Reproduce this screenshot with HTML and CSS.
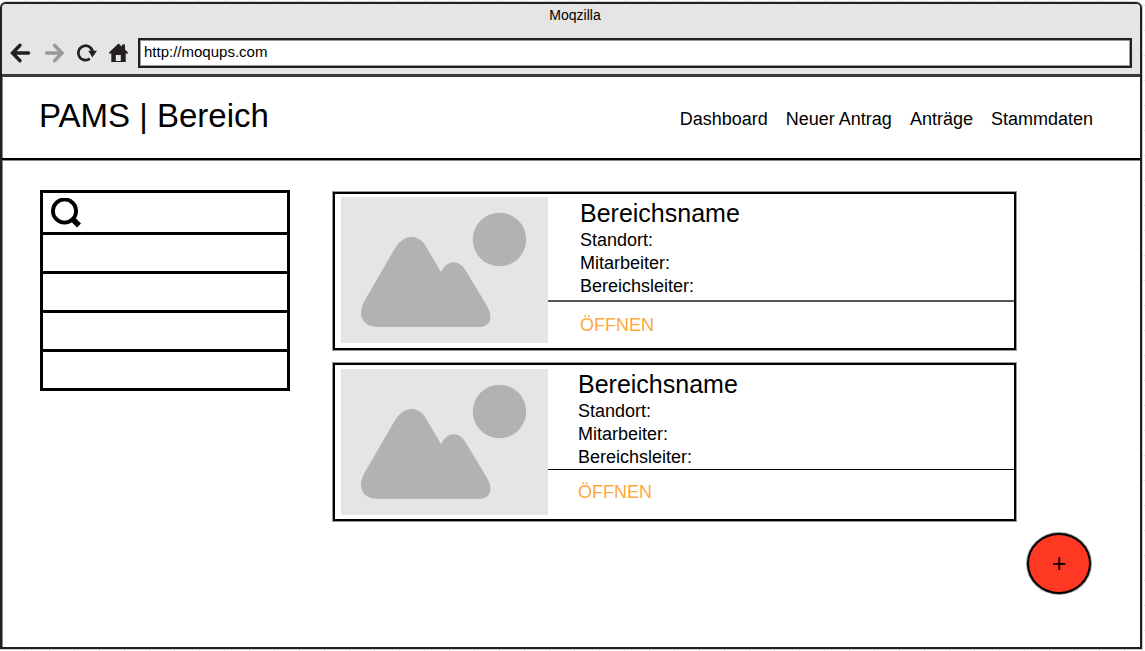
FILE: index.html
```html
<!DOCTYPE html>
<html lang="de">
<head>
<meta charset="utf-8">
<meta name="viewport" content="width=device-width, initial-scale=1">
<title>PAMS | Bereich</title>
<link rel="stylesheet" href="styles.css">
</head>
<body>
<svg class="defs" width="0" height="0" aria-hidden="true">
  <symbol id="placeholder" viewBox="0 0 207 146">
    <rect width="207" height="146" fill="#e5e5e5"/>
    <circle cx="158.500" cy="42.500" r="26.700" fill="#b2b2b2"/>
    <path d="M53 53C57 46 63 40 70.500 40C78 40 83 45 87 53L100 75C104 68 108 65.300 113 65.300C118 65.300 122 69 125 74L146 109C153 121 149 130 138 130L38 130C22 130 15 119 24 103Z" fill="#b2b2b2"/>
  </symbol>
</svg>
<div class="window">
  <div class="chrome">
    <div class="chrome-title">Moqzilla</div>
    <div class="chrome-bar">
      <div class="chrome-buttons">
        <button class="icon-button" type="button" aria-label="Zurück">
          <svg viewBox="0 0 20 20"><path d="M10 2.200L2.500 10L10 17.800M3 10H18.500" fill="none" stroke="#231f20" stroke-width="3.400" stroke-linecap="round" stroke-linejoin="miter"/></svg>
        </button>
        <button class="icon-button" type="button" aria-label="Vor">
          <svg viewBox="0 0 20 20"><path d="M11.500 2.200L19 10L11.500 17.800M18.500 10H3.500" fill="none" stroke="#999" stroke-width="3.400" stroke-linecap="round" stroke-linejoin="miter"/></svg>
        </button>
        <button class="icon-button" type="button" aria-label="Neu laden">
          <svg viewBox="0 0 20 20"><path d="M13.800 15.700A7.200 7.200 0 1 1 16.700 9.500" fill="none" stroke="#231f20" stroke-width="2.700"/><path d="M12.300 7.800H21L16.300 14.500Z" fill="#231f20"/></svg>
        </button>
        <button class="icon-button" type="button" aria-label="Startseite">
          <svg viewBox="0 0 20 20"><path d="M0 9.500L9.500 0.500L13 3.800V1.500H16V6.500L19 9.500V10.500H16.700V19H2.300V10.500H0Z" fill="#231f20"/><path d="M6.800 12H11.800V18H6.800Z" fill="#e5e5e5"/></svg>
        </button>
      </div>
      <input class="address" type="text" value="http://moqups.com" aria-label="Adresse">
    </div>
  </div>

  <header class="header">
    <h1 class="header-title">PAMS | Bereich</h1>
    <nav class="nav">
      <a class="nav-link" href="#">Dashboard</a>
      <a class="nav-link" href="#">Neuer Antrag</a>
      <a class="nav-link" href="#">Anträge</a>
      <a class="nav-link" href="#">Stammdaten</a>
    </nav>
  </header>

  <main class="main">
    <ul class="sidebar">
      <li class="sidebar-row search">
        <svg class="search-icon" viewBox="0 0 30 30" aria-hidden="true"><circle cx="13.500" cy="13" r="11.600" fill="none" stroke="#000" stroke-width="3.800"/><path d="M21 20.500L28 27.500" fill="none" stroke="#000" stroke-width="5.600"/></svg>
        <input class="search-input" type="text" aria-label="Suche">
      </li>
      <li class="sidebar-row"></li>
      <li class="sidebar-row"></li>
      <li class="sidebar-row"></li>
      <li class="sidebar-row"></li>
    </ul>

    <section class="cards">
      <article class="card">
        <svg class="card-image" viewBox="0 0 207 146" aria-hidden="true"><use href="#placeholder"/></svg>
        <div class="card-body">
          <div class="card-info">
            <h2 class="card-title">Bereichsname</h2>
            <p class="card-line">Standort:</p>
            <p class="card-line">Mitarbeiter:</p>
            <p class="card-line">Bereichsleiter:</p>
          </div>
          <div class="card-actions"><button class="open-button" type="button">ÖFFNEN</button></div>
        </div>
      </article>
      <article class="card card-compact">
        <svg class="card-image" viewBox="0 0 207 146" aria-hidden="true"><use href="#placeholder"/></svg>
        <div class="card-body">
          <div class="card-info">
            <h2 class="card-title">Bereichsname</h2>
            <p class="card-line">Standort:</p>
            <p class="card-line">Mitarbeiter:</p>
            <p class="card-line">Bereichsleiter:</p>
          </div>
          <div class="card-actions"><button class="open-button" type="button">ÖFFNEN</button></div>
        </div>
      </article>
    </section>

    <button class="add-button" type="button" aria-label="Hinzufügen">+</button>
  </main>
</div>
</body>
</html>
```

FILE: styles.css
```css
* {
  box-sizing: border-box;
}

body {
  margin: 0;
  display: flex;
  min-height: 100vh;
  padding: 2px 3px 2px 0;
  font-family: "Liberation Sans", Arial, sans-serif;
  font-size: 18px;
  color: #000;
  background-color: #fff;
  background-image:
    linear-gradient(to right, #e0e0e0 1px, transparent 1px),
    linear-gradient(to bottom, #e0e0e0 1px, transparent 1px);
  background-size: 25px 25px;
  background-position: 24px 5px;
}

h1, h2, p, ul {
  margin: 0;
  padding: 0;
  font-weight: normal;
}

button, input {
  font-family: inherit;
  color: inherit;
}

.defs {
  position: absolute;
}

.window {
  flex: 1;
  display: flex;
  flex-direction: column;
  border: 2px solid #231f20;
  border-radius: 6px 6px 0 0;
  background: #fff;
  box-shadow: 0 0 0 1px #ccc, inset 1px 0 #888;
  overflow: hidden;
}

/* Browser chrome */
.chrome {
  padding: 2px 8px 6px;
  background: #e5e5e5;
  border-bottom: 3px solid #3d393a;
}

.chrome-title {
  padding-left: 8px;
  font-size: 14px;
  line-height: 18px;
  text-align: center;
}

.chrome-bar {
  display: flex;
  align-items: center;
  gap: 9px;
  margin-top: 14px;
}

.chrome-buttons {
  display: flex;
  gap: 13px;
}

.icon-button {
  display: block;
  width: 20px;
  height: 20px;
  padding: 0;
  border: 0;
  background: none;
}

.icon-button svg {
  display: block;
  width: 20px;
  height: 20px;
  overflow: visible;
}

.address {
  flex: 1;
  min-width: 0;
  height: 30px;
  padding: 0 4px 3px;
  border: 2px solid #231f20;
  border-radius: 0;
  background: #fff;
  box-shadow: inset 0 0 0 1px #999;
  font-size: 15px;
}

/* Page header */
.header {
  display: flex;
  align-items: flex-end;
  justify-content: space-between;
  padding: 20px 47px 23px 37px;
  border-bottom: 2px solid #000;
  box-shadow: 0 1px #888;
}

.header-title {
  font-size: 33px;
  line-height: 38px;
}

.nav {
  display: flex;
  gap: 18px;
  padding-bottom: 5px;
}

.nav-link {
  color: inherit;
  text-decoration: none;
}

/* Content */
.main {
  flex: 1;
  display: flex;
  align-items: flex-start;
  padding: 30px 49px 53px 38px;
}

.sidebar {
  display: grid;
  grid-template-columns: minmax(0, 1fr);
  grid-auto-rows: minmax(39px, 1fr);
  flex: 0 0 250px;
  min-height: 201px;
  list-style: none;
  border: 3px solid #000;
}

.sidebar-row + .sidebar-row {
  border-top: 3px solid #000;
}

.search {
  display: flex;
  align-items: center;
  padding: 0 8px;
}

.search-icon {
  flex: none;
  width: 30px;
  height: 30px;
}

.search-input {
  flex: 1;
  min-width: 0;
  border: 0;
  background: none;
  font-size: 18px;
}

.cards {
  flex: 1;
  display: flex;
  flex-direction: column;
  gap: 13px;
  margin: 2px 11px 0 43px;
}

.card {
  display: flex;
  min-height: 158px;
  border: 2px solid #000;
  box-shadow: 0 0 0 1px #999;
}

.card-image {
  flex: none;
  width: 207px;
  height: 146px;
  margin: 3px 0 0 6px;
}

.card-body {
  flex: 1;
}

.card-info {
  padding: 5px 0 2px 32px;
  border-bottom: 2px solid #555;
}

.card-title {
  margin-bottom: 2px;
  font-size: 25px;
  line-height: 28px;
}

.card-line {
  line-height: 23px;
}

.card-actions {
  padding: 12px 0 0 32px;
}

.open-button {
  display: block;
  padding: 0;
  border: 0;
  background: none;
  color: #ffa840;
  font-size: 18px;
  line-height: 22px;
}

.card-compact .card-image {
  margin-top: 4px;
}

.card-compact .card-info {
  padding-bottom: 0;
  padding-left: 30px;
  border-bottom: 1px solid #000;
}

.card-compact .card-actions {
  padding-top: 11px;
  padding-left: 30px;
}

.add-button {
  align-self: flex-end;
  width: 64px;
  height: 61px;
  padding: 0;
  border: 2px solid #000;
  border-radius: 50%;
  background: #ff3823;
  box-shadow: 0 0 0 1px #999;
  font-size: 25px;
}
```
